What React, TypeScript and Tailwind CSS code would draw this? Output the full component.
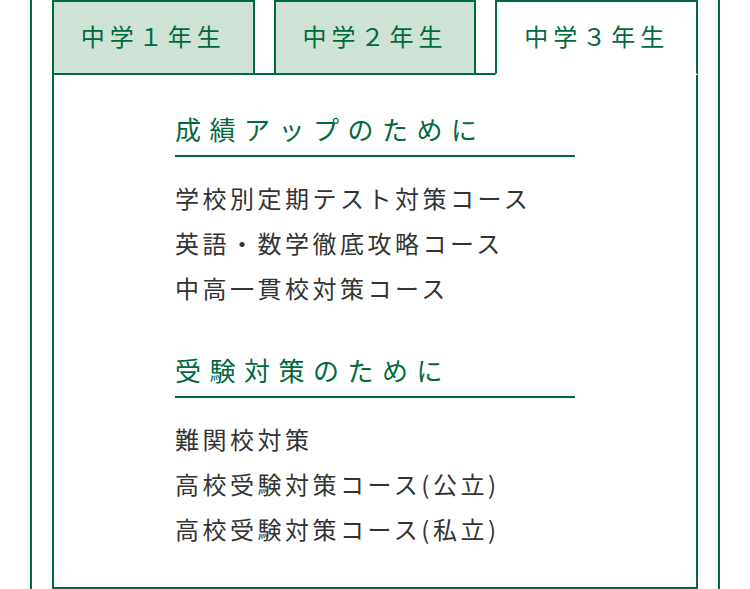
import React from "react";

const GREEN = "text-[#00693e]";

const tabs = [
  { label: "中学１年生", active: false },
  { label: "中学２年生", active: false },
  { label: "中学３年生", active: true },
];

const sections = [
  {
    title: "成績アップのために",
    items: ["学校別定期テスト対策コース", "英語・数学徹底攻略コース", "中高一貫校対策コース"],
  },
  {
    title: "受験対策のために",
    items: ["難関校対策", "高校受験対策コース(公立)", "高校受験対策コース(私立)"],
  },
];

export default function App() {
  return (
    <div
      className="w-[750px] h-[589px] overflow-hidden bg-white"
      style={{ fontFamily: '"Noto Sans CJK JP", "Noto Sans", sans-serif' }}
    >
      <div className="ml-[30px] w-[690px] h-full border-x-2 border-[#00693e] px-[20px]">
        {/* grade tabs */}
        <div className="flex gap-[19px] -mb-[2px] relative z-10">
          {tabs.map((t) => (
            <div
              key={t.label}
              className={
                t.active
                  ? "flex-1 h-[75px] border-2 border-[#00693e] border-b-white bg-white flex items-center justify-center pb-[3px]"
                  : "flex-1 h-[75px] border-2 border-[#00693e] bg-[#cfe2d6] flex items-center justify-center pb-[3px]"
              }
            >
              <span className={`${GREEN} text-[24px] leading-[30px] tracking-[5px]`}>{t.label}</span>
            </div>
          ))}
        </div>

        {/* course list */}
        <div className="h-[516px] border-2 border-[#00693e]">
          <div className="w-[400px] mx-auto pt-[35px]">
            {sections.map((s, i) => (
              <div key={s.title} className={i > 0 ? "mt-[41px]" : ""}>
                <h2
                  className={`${GREEN} text-[26px] leading-[37px] tracking-[8.5px] font-normal pb-[8px] border-b-2 border-[#00693e]`}
                >
                  {s.title}
                </h2>
                <ul className="mt-[18px]">
                  {s.items.map((it) => (
                    <li key={it} className="text-[#333333] text-[24px] leading-[45px] tracking-[3.5px]">
                      {it}
                    </li>
                  ))}
                </ul>
              </div>
            ))}
          </div>
        </div>
      </div>
    </div>
  );
}
